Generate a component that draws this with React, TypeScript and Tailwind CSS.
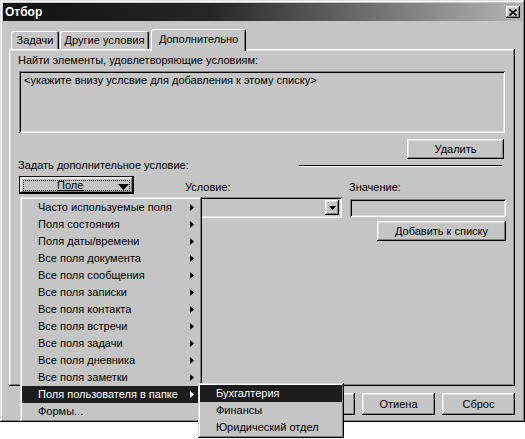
import React from "react";

const raised =
  "shadow-[inset_-1px_-1px_0_#000,inset_1px_1px_0_#fff,inset_-2px_-2px_0_#808080,inset_2px_2px_0_#dfdfdf]";
const sunken =
  "shadow-[inset_1px_1px_0_#808080,inset_-1px_-1px_0_#fff,inset_2px_2px_0_#000,inset_-2px_-2px_0_#dfdfdf]";
const windowFrame =
  "shadow-[inset_-1px_-1px_0_#000,inset_1px_1px_0_#dfdfdf,inset_-2px_-2px_0_#808080,inset_2px_2px_0_#fff]";
const panelFrame =
  "shadow-[inset_-1px_-1px_0_#000,inset_1px_1px_0_#fff,inset_-2px_-2px_0_#808080,inset_2px_2px_0_#dfdfdf]";
const menuFrame =
  "shadow-[inset_-1px_-1px_0_#000,inset_1px_1px_0_#dfdfdf,inset_-2px_-2px_0_#808080,inset_2px_2px_0_#fff]";

function Arrow({ white }: { white?: boolean }) {
  return (
    <svg width="4" height="7" viewBox="0 0 4 7" className="block">
      <path d="M0 0 L4 3.5 L0 7 Z" fill={white ? "#fff" : "#000"} />
    </svg>
  );
}

function MenuItem({
  label,
  sub,
  active,
}: {
  label: string;
  sub?: boolean;
  active?: boolean;
}) {
  return (
    <div
      className={`h-[17px] flex items-center justify-between pl-[16px] pr-[6px] whitespace-nowrap ${
        active ? "bg-[#1c1c1c] text-white" : ""
      }`}
    >
      <span>{label}</span>
      {sub && <Arrow white={active} />}
    </div>
  );
}

function Button({
  label,
  className = "",
}: {
  label: string;
  className?: string;
}) {
  return (
    <div
      className={`flex items-center justify-center bg-[#c5c5c5] ${raised} ${className}`}
    >
      {label}
    </div>
  );
}

export default function App() {
  const menu: { label: string; sub?: boolean; active?: boolean }[] = [
    { label: "Часто используемые поля", sub: true },
    { label: "Поля состояния", sub: true },
    { label: "Поля даты/времени", sub: true },
    { label: "Все поля документа", sub: true },
    { label: "Все поля сообщения", sub: true },
    { label: "Все поля записки", sub: true },
    { label: "Все поля контакта", sub: true },
    { label: "Все поля встречи", sub: true },
    { label: "Все поля задачи", sub: true },
    { label: "Все поля дневника", sub: true },
    { label: "Все поля заметки", sub: true },
    { label: "Поля пользователя в папке", sub: true, active: true },
    { label: "Формы..." },
  ];

  return (
    <div className="relative w-[525px] h-[439px] bg-white font-['Liberation_Sans',Arial,sans-serif] text-[11px] leading-[13px] text-black overflow-hidden">
      {/* Window */}
      <div
        className={`w-[525px] h-[422px] bg-[#c5c5c5] p-[3px] flex flex-col ${windowFrame}`}
      >
        {/* Title bar */}
        <div className="h-[18px] flex items-center justify-between pl-[2px] pr-[2px] bg-[linear-gradient(to_right,#111111_0%,#262626_40%,#b4b4b4_100%)]">
          <span className="text-white font-bold text-[12px] leading-[14px]">
            Отбор
          </span>
          <div
            className={`w-[14px] h-[12px] bg-[#c5c5c5] flex items-center justify-center ${raised}`}
          >
            <svg width="8" height="7" viewBox="0 0 8 7">
              <path
                d="M0.5 0.5 L7.5 6.5 M7.5 0.5 L0.5 6.5"
                stroke="#000"
                strokeWidth="1.6"
              />
            </svg>
          </div>
        </div>

        {/* Body */}
        <div className="flex flex-col pl-[6px] pr-[7px] pt-[8px]">
          {/* Tabs */}
          <div className="h-[20px] flex items-end pl-[2px]">
            <div
              className={`w-[48px] h-[18px] flex items-center justify-center shadow-[inset_1px_1px_0_#fff,inset_-1px_0_0_#000,inset_-2px_0_0_#808080] rounded-t-[2px]`}
            >
              Задачи
            </div>
            <div
              className={`ml-[1px] w-[89px] h-[18px] flex items-center justify-center shadow-[inset_1px_1px_0_#fff,inset_-1px_0_0_#000,inset_-2px_0_0_#808080] rounded-t-[2px]`}
            >
              Другие условия
            </div>
            <div
              className={`relative z-10 ml-[2px] w-[95px] h-[22px] -mb-[2px] pb-[2px] flex items-center justify-center bg-[#c5c5c5] shadow-[inset_1px_1px_0_#fff,inset_-1px_0_0_#000,inset_-2px_0_0_#808080] rounded-t-[2px]`}
            >
              Дополнительно
            </div>
          </div>

          {/* Panel */}
          <div className={`h-[337px] flex flex-col ${panelFrame}`}>
            <div className="mt-[5px] ml-[9px]">
              Найти элементы, удовлетворяющие условиям:
            </div>
            <div
              className={`mt-[4px] ml-[10px] w-[486px] h-[62px] pl-[5px] pt-[3px] ${sunken}`}
            >
              &lt;укажите внизу услсвие для добавления к этому списку&gt;
            </div>
            <Button
              label="Удалить"
              className="mt-[6px] ml-[398px] w-[97px] h-[20px]"
            />
            <div className="h-[13px] flex items-center pl-[9px]">
              <span>Задать дополнительное условие:</span>
              <div className="ml-auto mr-[13px] w-[203px] h-[2px] border-t border-t-[#000] border-b border-b-white" />
            </div>

            {/* Field / labels row */}
            <div className="mt-[4px] h-[18px] flex">
              <div className="ml-[10px] w-[115px] h-[18px] border border-black bg-[#c5c5c5] relative">
                <div
                  className={`absolute inset-0 ${raised} flex items-center`}
                >
                  <div className="absolute left-[3px] right-[3px] top-[3px] bottom-[2px] border border-dotted border-black" />
                  <span className="ml-[37px] underline leading-[12px]">
                    Поле
                  </span>
                  <svg
                    width="11"
                    height="6"
                    viewBox="0 0 11 6"
                    className="absolute left-[98px] top-[7px]"
                  >
                    <path d="M0 0 L11 0 L5.5 6 Z" fill="#000" />
                  </svg>
                </div>
              </div>
              <div className="ml-[51px] w-[164px] self-end">Условие:</div>
              <div className="self-end">Значение:</div>
            </div>

            {/* Combo / value row */}
            <div className="mt-[3px] flex items-start">
              <div
                className={`ml-[176px] w-[157px] h-[21px] relative ${sunken}`}
              >
                <div
                  className={`absolute right-[3px] top-[3px] w-[14px] h-[15px] flex items-center justify-center ${raised}`}
                >
                  <svg width="7" height="4" viewBox="0 0 7 4">
                    <path d="M0 0 L7 0 L3.5 4 Z" fill="#000" />
                  </svg>
                </div>
              </div>
              <div className={`ml-[8px] mt-[2px] w-[156px] h-[18px] ${sunken}`} />
            </div>

            <Button
              label="Добавить к списку"
              className="mt-[3px] ml-[368px] w-[129px] h-[20px]"
            />
          </div>

          {/* Bottom buttons */}
          <div className="mt-[7px] flex justify-end gap-[7px]">
            <Button label="ОК" className="w-[73px] h-[22px]" />
            <Button label="Отиена" className="w-[73px] h-[22px]" />
            <Button label="Сброс" className="w-[73px] h-[22px]" />
          </div>
        </div>
      </div>

      {/* Dropdown menu */}
      <div
        className={`absolute left-[20px] top-[197px] w-[182px] h-[225px] bg-[#c5c5c5] p-[2px] ${menuFrame}`}
      >
        {menu.map((m) => (
          <MenuItem key={m.label} {...m} />
        ))}
      </div>

      {/* Submenu */}
      <div
        className={`absolute left-[198px] top-[383px] w-[146px] h-[55px] bg-[#c5c5c5] p-[2px] ${menuFrame}`}
      >
        <MenuItem label="Бухгалтерия" active />
        <MenuItem label="Финансы" />
        <MenuItem label="Юридический отдел" />
      </div>
    </div>
  );
}
